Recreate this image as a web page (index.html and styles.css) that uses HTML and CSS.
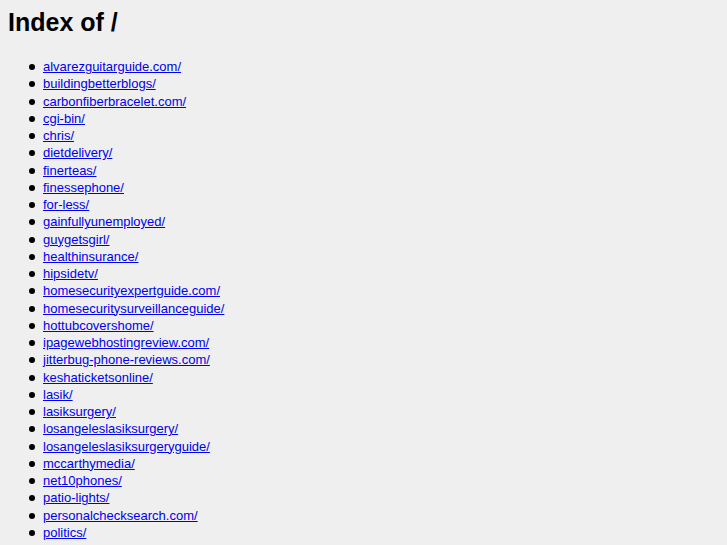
FILE: index.html
```html
<!DOCTYPE html>
<html>
  <head>
    <title>Index of /</title>
    <link rel="stylesheet" href="styles.css">
  </head>
  <body>
    <h1 class="title">Index of /</h1>
    <ul class="listing">
      <li><a href="alvarezguitarguide.com/">alvarezguitarguide.com/</a></li>
      <li><a href="buildingbetterblogs/">buildingbetterblogs/</a></li>
      <li><a href="carbonfiberbracelet.com/">carbonfiberbracelet.com/</a></li>
      <li><a href="cgi-bin/">cgi-bin/</a></li>
      <li><a href="chris/">chris/</a></li>
      <li><a href="dietdelivery/">dietdelivery/</a></li>
      <li><a href="finerteas/">finerteas/</a></li>
      <li><a href="finessephone/">finessephone/</a></li>
      <li><a href="for-less/">for-less/</a></li>
      <li><a href="gainfullyunemployed/">gainfullyunemployed/</a></li>
      <li><a href="guygetsgirl/">guygetsgirl/</a></li>
      <li><a href="healthinsurance/">healthinsurance/</a></li>
      <li><a href="hipsidetv/">hipsidetv/</a></li>
      <li><a href="homesecurityexpertguide.com/">homesecurityexpertguide.com/</a></li>
      <li><a href="homesecuritysurveillanceguide/">homesecuritysurveillanceguide/</a></li>
      <li><a href="hottubcovershome/">hottubcovershome/</a></li>
      <li><a href="ipagewebhostingreview.com/">ipagewebhostingreview.com/</a></li>
      <li><a href="jitterbug-phone-reviews.com/">jitterbug-phone-reviews.com/</a></li>
      <li><a href="keshaticketsonline/">keshaticketsonline/</a></li>
      <li><a href="lasik/">lasik/</a></li>
      <li><a href="lasiksurgery/">lasiksurgery/</a></li>
      <li><a href="losangeleslasiksurgery/">losangeleslasiksurgery/</a></li>
      <li><a href="losangeleslasiksurgeryguide/">losangeleslasiksurgeryguide/</a></li>
      <li><a href="mccarthymedia/">mccarthymedia/</a></li>
      <li><a href="net10phones/">net10phones/</a></li>
      <li><a href="patio-lights/">patio-lights/</a></li>
      <li><a href="personalchecksearch.com/">personalchecksearch.com/</a></li>
      <li><a href="politics/">politics/</a></li>
    </ul>
  </body>
</html>
```

FILE: styles.css
```css
body {
  background-color: #efefef;
  color: black;
  font-family: "Liberation Sans", Arial, sans-serif;
  font-size: 13px;
  margin: 8px;
}
.title {
  font-size: 25px;
  font-weight: bold;
  margin: 0 0 21px 0;
}
.listing {
  margin: 0;
  padding-left: 35px;
  line-height: 17.25px;
  list-style: none;
}
.listing li::before {
  content: "";
  display: inline-block;
  width: 6px;
  height: 6px;
  border-radius: 50%;
  background-color: black;
  margin-left: -14px;
  margin-right: 8px;
  vertical-align: 1px;
}
.listing a {
  color: #0000ee;
}
```
